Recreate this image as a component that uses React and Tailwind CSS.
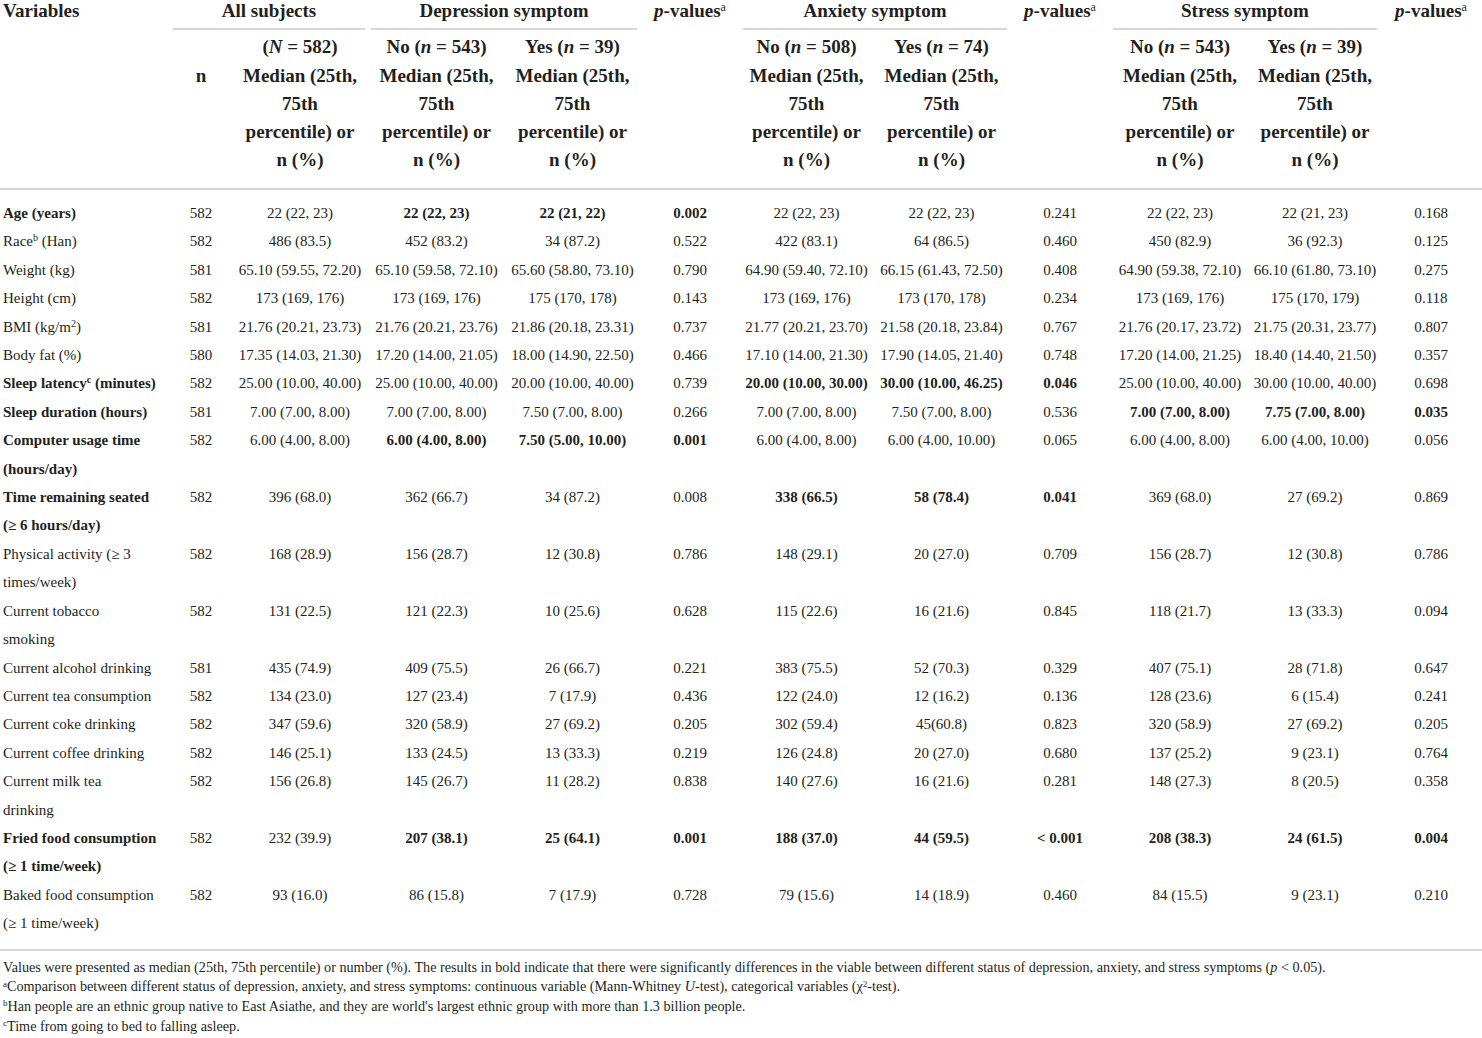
import React from 'react'

const COLS = 'grid grid-cols-[170px_62px_136px_137px_135px_100px_133px_137px_100px_140px_130px_102px]'

// label, labelBold, boldGroups ('d' depression, 'a' anxiety, 's' stress), values...
const rows = [
    [<>Age (years)</>, true, 'd', ['582', '22 (22, 23)', '22 (22, 23)', '22 (21, 22)', '0.002', '22 (22, 23)', '22 (22, 23)', '0.241', '22 (22, 23)', '22 (21, 23)', '0.168']],
    [<>Race<sup className="text-[10px]">b</sup> (Han)</>, false, '', ['582', '486 (83.5)', '452 (83.2)', '34 (87.2)', '0.522', '422 (83.1)', '64 (86.5)', '0.460', '450 (82.9)', '36 (92.3)', '0.125']],
    [<>Weight (kg)</>, false, '', ['581', '65.10 (59.55, 72.20)', '65.10 (59.58, 72.10)', '65.60 (58.80, 73.10)', '0.790', '64.90 (59.40, 72.10)', '66.15 (61.43, 72.50)', '0.408', '64.90 (59.38, 72.10)', '66.10 (61.80, 73.10)', '0.275']],
    [<>Height (cm)</>, false, '', ['582', '173 (169, 176)', '173 (169, 176)', '175 (170, 178)', '0.143', '173 (169, 176)', '173 (170, 178)', '0.234', '173 (169, 176)', '175 (170, 179)', '0.118']],
    [<>BMI (kg/m<sup className="text-[10px]">2</sup>)</>, false, '', ['581', '21.76 (20.21, 23.73)', '21.76 (20.21, 23.76)', '21.86 (20.18, 23.31)', '0.737', '21.77 (20.21, 23.70)', '21.58 (20.18, 23.84)', '0.767', '21.76 (20.17, 23.72)', '21.75 (20.31, 23.77)', '0.807']],
    [<>Body fat (%)</>, false, '', ['580', '17.35 (14.03, 21.30)', '17.20 (14.00, 21.05)', '18.00 (14.90, 22.50)', '0.466', '17.10 (14.00, 21.30)', '17.90 (14.05, 21.40)', '0.748', '17.20 (14.00, 21.25)', '18.40 (14.40, 21.50)', '0.357']],
    [<>Sleep latency<sup className="text-[10px]">c</sup> (minutes)</>, true, 'a', ['582', '25.00 (10.00, 40.00)', '25.00 (10.00, 40.00)', '20.00 (10.00, 40.00)', '0.739', '20.00 (10.00, 30.00)', '30.00 (10.00, 46.25)', '0.046', '25.00 (10.00, 40.00)', '30.00 (10.00, 40.00)', '0.698']],
    [<>Sleep duration (hours)</>, true, 's', ['581', '7.00 (7.00, 8.00)', '7.00 (7.00, 8.00)', '7.50 (7.00, 8.00)', '0.266', '7.00 (7.00, 8.00)', '7.50 (7.00, 8.00)', '0.536', '7.00 (7.00, 8.00)', '7.75 (7.00, 8.00)', '0.035']],
    [<>Computer usage time<br />(hours/day)</>, true, 'd', ['582', '6.00 (4.00, 8.00)', '6.00 (4.00, 8.00)', '7.50 (5.00, 10.00)', '0.001', '6.00 (4.00, 8.00)', '6.00 (4.00, 10.00)', '0.065', '6.00 (4.00, 8.00)', '6.00 (4.00, 10.00)', '0.056']],
    [<>Time remaining seated<br />(≥ 6 hours/day)</>, true, 'a', ['582', '396 (68.0)', '362 (66.7)', '34 (87.2)', '0.008', '338 (66.5)', '58 (78.4)', '0.041', '369 (68.0)', '27 (69.2)', '0.869']],
    [<>Physical activity (≥ 3<br />times/week)</>, false, '', ['582', '168 (28.9)', '156 (28.7)', '12 (30.8)', '0.786', '148 (29.1)', '20 (27.0)', '0.709', '156 (28.7)', '12 (30.8)', '0.786']],
    [<>Current tobacco<br />smoking</>, false, '', ['582', '131 (22.5)', '121 (22.3)', '10 (25.6)', '0.628', '115 (22.6)', '16 (21.6)', '0.845', '118 (21.7)', '13 (33.3)', '0.094']],
    [<>Current alcohol drinking</>, false, '', ['581', '435 (74.9)', '409 (75.5)', '26 (66.7)', '0.221', '383 (75.5)', '52 (70.3)', '0.329', '407 (75.1)', '28 (71.8)', '0.647']],
    [<>Current tea consumption</>, false, '', ['582', '134 (23.0)', '127 (23.4)', '7 (17.9)', '0.436', '122 (24.0)', '12 (16.2)', '0.136', '128 (23.6)', '6 (15.4)', '0.241']],
    [<>Current coke drinking</>, false, '', ['582', '347 (59.6)', '320 (58.9)', '27 (69.2)', '0.205', '302 (59.4)', '45(60.8)', '0.823', '320 (58.9)', '27 (69.2)', '0.205']],
    [<>Current coffee drinking</>, false, '', ['582', '146 (25.1)', '133 (24.5)', '13 (33.3)', '0.219', '126 (24.8)', '20 (27.0)', '0.680', '137 (25.2)', '9 (23.1)', '0.764']],
    [<>Current milk tea<br />drinking</>, false, '', ['582', '156 (26.8)', '145 (26.7)', '11 (28.2)', '0.838', '140 (27.6)', '16 (21.6)', '0.281', '148 (27.3)', '8 (20.5)', '0.358']],
    [<>Fried food consumption<br />(≥ 1 time/week)</>, true, 'das', ['582', '232 (39.9)', '207 (38.1)', '25 (64.1)', '0.001', '188 (37.0)', '44 (59.5)', '< 0.001', '208 (38.3)', '24 (61.5)', '0.004']],
    [<>Baked food consumption<br />(≥ 1 time/week)</>, false, '', ['582', '93 (16.0)', '86 (15.8)', '7 (17.9)', '0.728', '79 (15.6)', '14 (18.9)', '0.460', '84 (15.5)', '9 (23.1)', '0.210']],
]

// which group each value column belongs to
const groupOf = ['', '', 'd', 'd', 'd', 'a', 'a', 'a', 's', 's', 's']

function PValues() {
    return <span><i>p</i>-values<sup className="text-[12px] font-normal">a</sup></span>
}

function GroupHead({ title, span }) {
    return (
        <div className={`${span} px-[3px]`}>
            <div className="text-center leading-[22px]">{title}</div>
            <div className="mt-[6px] h-[2px] bg-[#d6d6d6]" />
        </div>
    )
}

function SubHead({ children }) {
    return <div className="text-center pt-[3px] leading-[28px] whitespace-nowrap">{children}</div>
}

function MedianHead() {
    return (
        <div className="text-center pt-[1px] leading-[28px] whitespace-nowrap">
            Median (25th,<br />75th<br />percentile) or<br />n (%)
        </div>
    )
}

export default function App() {
    return (
        <div className="w-[1482px] bg-white text-[#231f20]" style={{ fontFamily: '"Liberation Serif", "Times New Roman", serif' }}>
            {/* 表头 */}
            <div className={`${COLS} font-bold text-[19px]`}>
                <div className="pl-[3px] leading-[22px]">Variables</div>
                <GroupHead title="All subjects" span="col-span-2" />
                <GroupHead title="Depression symptom" span="col-span-2" />
                <div className="text-center leading-[22px]"><PValues /></div>
                <GroupHead title="Anxiety symptom" span="col-span-2" />
                <div className="text-center leading-[22px]"><PValues /></div>
                <GroupHead title="Stress symptom" span="col-span-2" />
                <div className="text-center leading-[22px]"><PValues /></div>

                <div />
                <div />
                <SubHead>(<i>N</i> = 582)</SubHead>
                <SubHead>No (<i>n</i> = 543)</SubHead>
                <SubHead>Yes (<i>n</i> = 39)</SubHead>
                <div />
                <SubHead>No (<i>n</i> = 508)</SubHead>
                <SubHead>Yes (<i>n</i> = 74)</SubHead>
                <div />
                <SubHead>No (<i>n</i> = 543)</SubHead>
                <SubHead>Yes (<i>n</i> = 39)</SubHead>
                <div />

                <div />
                <div className="text-center pt-[1px] leading-[28px]">n</div>
                <MedianHead />
                <MedianHead />
                <MedianHead />
                <div />
                <MedianHead />
                <MedianHead />
                <div />
                <MedianHead />
                <MedianHead />
                <div />
            </div>

            <div className="mt-[14px] h-[2px] bg-[#d6d6d6]" />

            {/* 数据行 */}
            <div className={`${COLS} pt-[9px] text-[15px] leading-[28.4px]`}>
                {rows.map(([label, labelBold, bold, vals], i) => (
                    <React.Fragment key={i}>
                        <div className={`pl-[3px] whitespace-nowrap ${labelBold ? 'font-bold' : ''}`}>{label}</div>
                        {vals.map((v, j) => (
                            <div
                                key={j}
                                className={`text-center whitespace-nowrap ${groupOf[j] && bold.includes(groupOf[j]) ? 'font-bold' : ''}`}
                            >
                                {v}
                            </div>
                        ))}
                    </React.Fragment>
                ))}
            </div>

            <div className="mt-[11px] h-[2px] bg-[#d6d6d6]" />

            {/* 脚注 */}
            <div className="pt-[7px] pl-[3px] text-[14.2px] leading-[19.7px]">
                <p>Values were presented as median (25th, 75th percentile) or number (%). The results in bold indicate that there were significantly differences in the viable between different status of depression, anxiety, and stress symptoms (<i>p</i> &lt; 0.05).</p>
                <p><sup className="text-[9px]">a</sup>Comparison between different status of depression, anxiety, and stress symptoms: continuous variable (Mann-Whitney <i>U</i>-test), categorical variables (χ<sup className="text-[9px]">2</sup>-test).</p>
                <p><sup className="text-[9px]">b</sup>Han people are an ethnic group native to East Asiathe, and they are world's largest ethnic group with more than 1.3 billion people.</p>
                <p><sup className="text-[9px]">c</sup>Time from going to bed to falling asleep.</p>
            </div>
        </div>
    )
}
